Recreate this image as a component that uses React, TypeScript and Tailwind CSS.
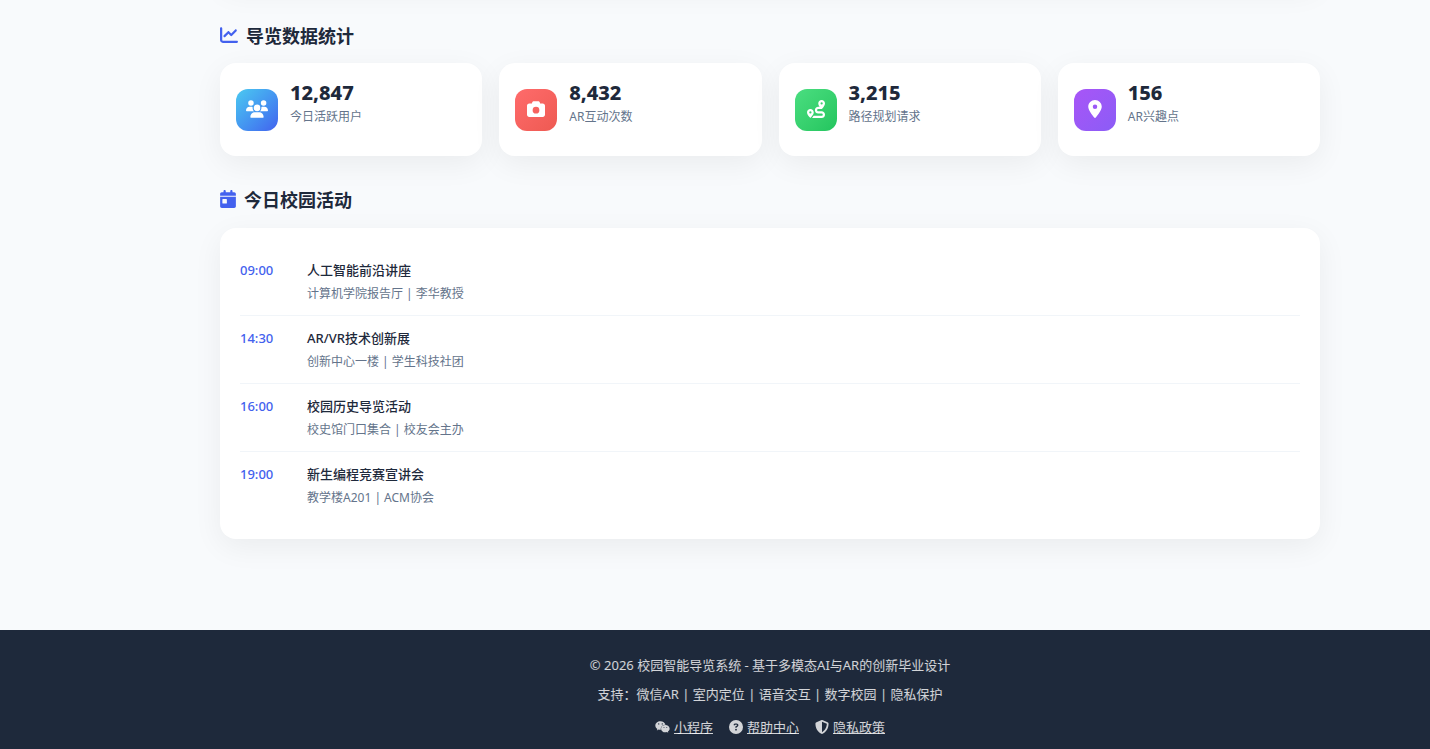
import type { IconType } from 'react-icons';
import {
  FaCalendarDay,
  FaCamera,
  FaChartLine,
  FaCircleQuestion,
  FaLocationDot,
  FaRoute,
  FaShieldHalved,
  FaUsers,
  FaWeixin,
} from 'react-icons/fa6';

const stats = [
  { value: '12,847', label: '今日活跃用户', icon: FaUsers, color: 'from-[#4cc9f0] to-[#4361ee]', iconSize: 'h-[18px] w-[22px]' },
  { value: '8,432', label: 'AR互动次数', icon: FaCamera, color: 'from-[#ff6b6b] to-[#ee5a52]', iconSize: 'size-[18px]' },
  { value: '3,215', label: '路径规划请求', icon: FaRoute, color: 'from-[#4ade80] to-[#22c55e]', iconSize: 'size-[18px]' },
  { value: '156', label: 'AR兴趣点', icon: FaLocationDot, color: 'from-[#a855f7] to-[#8b5cf6]', iconSize: 'size-[18px]' },
];

const events = [
  { time: '09:00', title: '人工智能前沿讲座', place: '计算机学院报告厅 | 李华教授' },
  { time: '14:30', title: 'AR/VR技术创新展', place: '创新中心一楼 | 学生科技社团' },
  { time: '16:00', title: '校园历史导览活动', place: '校史馆门口集合 | 校友会主办' },
  { time: '19:00', title: '新生编程竞赛宣讲会', place: '教学楼A201 | ACM协会' },
];

const links = [
  { label: '小程序', icon: FaWeixin, iconSize: 'h-[14px] w-[15px]' },
  { label: '帮助中心', icon: FaCircleQuestion, iconSize: 'size-[14px]' },
  { label: '隐私政策', icon: FaShieldHalved, iconSize: 'size-[14px]' },
];

function SectionTitle({ icon: Icon, iconSize, children }: { icon: IconType; iconSize: string; children: string }) {
  return (
    <h2 className="flex items-center gap-2 text-[18px] leading-7 font-bold">
      <Icon className={`mb-0.5 text-[#4361ee] ${iconSize}`} />
      {children}
    </h2>
  );
}

export default function App() {
  return (
    <div className="flex min-h-screen flex-col overflow-hidden bg-[#f8fafc] font-['Noto_Sans','Noto_Sans_CJK_SC',sans-serif] text-[#1e293b]">
      <main className="flex-1 pb-[91px] pl-[110px]">
        <div className="mx-auto max-w-[1100px]">
          {/* tail of the panel scrolled off above */}
          <div className="-mt-24 h-20 rounded-2xl bg-white shadow-[0_8px_30px_rgba(0,0,0,0.06)]" />

          <section className="pt-[38px]">
            <SectionTitle icon={FaChartLine} iconSize="size-[18px]">导览数据统计</SectionTitle>
            <div className="mt-[13px] grid grid-cols-4 gap-[17px]">
              {stats.map(({ value, label, icon: Icon, color, iconSize }) => (
                <div key={label} className="flex items-center gap-3 rounded-2xl bg-white p-4 shadow-[0_8px_30px_rgba(0,0,0,0.06)]">
                  <div className={`flex size-[42px] shrink-0 items-center justify-center rounded-xl bg-linear-135 pb-0.5 text-white ${color}`}>
                    <Icon className={iconSize} />
                  </div>
                  <div className="mb-[13px]">
                    <h3 className="text-[20px] leading-7 font-extrabold">{value}</h3>
                    <p className="text-[12px] leading-5 text-[#64748b]">{label}</p>
                  </div>
                </div>
              ))}
            </div>
          </section>

          <section className="mt-[30px]">
            <SectionTitle icon={FaCalendarDay} iconSize="h-[18px] w-4">今日校园活动</SectionTitle>
            <ul className="mt-[14px] rounded-2xl bg-white p-5 shadow-[0_8px_30px_rgba(0,0,0,0.06)]">
              {events.map((event) => (
                <li key={event.time} className="flex border-b border-[#f1f5f9] pt-[11px] pb-2.5 last:border-b-0">
                  <time className="w-[67px] shrink-0 text-[13px] leading-[22px] font-medium text-[#4361ee]">{event.time}</time>
                  <div>
                    <h4 className="text-[13px] leading-[22px] font-medium">{event.title}</h4>
                    <p className="mt-0.5 text-[12px] leading-[22px] text-[#64748b]">{event.place}</p>
                  </div>
                </li>
              ))}
            </ul>
          </section>
        </div>
      </main>

      <footer className="bg-[#1e293b] pt-6 pb-[11px] pl-[110px] text-center text-[13px] leading-[22px] text-white/80">
        <p>© 2026 校园智能导览系统 - 基于多模态AI与AR的创新毕业设计</p>
        <p className="mt-[7px]">支持：微信AR | 室内定位 | 语音交互 | 数字校园 | 隐私保护</p>
        <nav className="mt-[11px] flex justify-center gap-4">
          {links.map(({ label, icon: Icon, iconSize }) => (
            <span key={label} className="flex items-center gap-1">
              <Icon className={iconSize} />
              <a href="#" className="underline">{label}</a>
            </span>
          ))}
        </nav>
      </footer>
    </div>
  );
}
